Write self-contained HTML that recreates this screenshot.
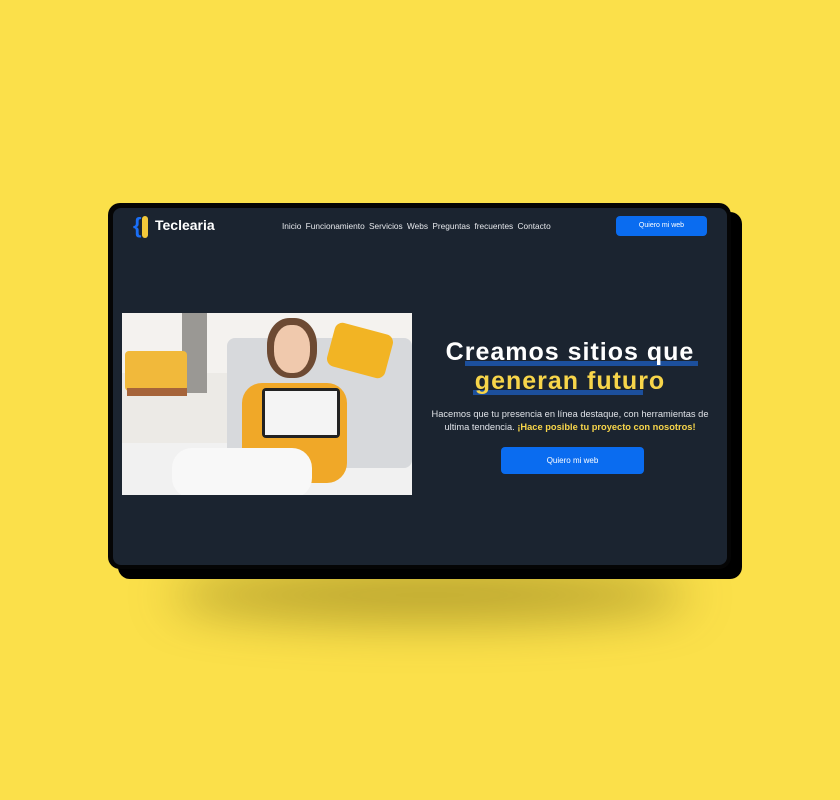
<!DOCTYPE html>
<html><head><meta charset="utf-8"><style>
*{margin:0;padding:0;box-sizing:border-box}
body{width:840px;height:800px;background:#fbe04a;position:relative;overflow:hidden;font-family:"Liberation Sans",sans-serif}
.glow{position:absolute;left:170px;top:570px;width:520px;height:50px;border-radius:50%;background:rgba(70,60,0,.4);filter:blur(24px)}
.back{position:absolute;left:118px;top:212px;width:624px;height:367px;background:#000;border-radius:12px}
.frame{position:absolute;left:108px;top:203px;width:623px;height:366px;background:#050505;border-radius:12px}
.screen{position:absolute;left:113px;top:208px;width:614px;height:357px;background:#1b2430;border-radius:8px;overflow:hidden}
.nav{position:absolute;top:13px;font-size:8.3px;color:#e6e8ec;left:169px;white-space:nowrap;word-spacing:2px}
.btn{position:absolute;background:#0a6cf0;color:#fff;border-radius:4px;text-align:center}
.photo{position:absolute;left:9px;top:105px;width:290px;height:182px;background:#eceae6;overflow:hidden}
.photo div{position:absolute}
h1{position:absolute;left:300px;width:314px;top:130px;text-align:center;font-size:25px;line-height:29px;color:#fff;font-weight:bold;letter-spacing:1px}
.y{color:#f7d54a}
.hl{position:absolute;background:#1c4f9c;height:5px}
p{position:absolute;left:300px;width:314px;top:200px;text-align:center;font-size:9.3px;line-height:13px;color:#e0e3e8}
</style></head><body>
<div class="glow"></div>
<div class="back"></div>
<div class="frame"></div>
<div class="screen">
 <div style="position:absolute;left:20px;top:5px;font-size:22px;color:#1a6ef5;font-weight:bold">{</div>
 <div style="position:absolute;left:29px;top:8px;width:6px;height:22px;background:#f2c83a;border-radius:3px"></div>
 <div style="position:absolute;left:42px;top:9px;font-size:14px;color:#fff;font-weight:bold">Teclearia</div>
 <div class="nav">Inicio Funcionamiento Servicios Webs Preguntas frecuentes Contacto</div>
 <div class="btn" style="left:503px;top:8px;width:91px;height:20px;font-size:7px;line-height:20px">Quiero mi web</div>
 <div class="photo">
  <div style="left:0;top:0;width:290px;height:60px;background:#f4f2ef"></div>
  <div style="left:60px;top:0;width:25px;height:80px;background:#9a9894"></div>
  <div style="left:0;top:130px;width:290px;height:52px;background:#f1f1f1"></div>
  <div style="left:3px;top:38px;width:62px;height:40px;background:#f1b93b;border-radius:4px"></div>
  <div style="left:5px;top:75px;width:60px;height:8px;background:#a6643a"></div>
  <div style="left:105px;top:25px;width:185px;height:130px;background:#d7d9dc;border-radius:8px"></div>
  <div style="left:208px;top:15px;width:60px;height:45px;background:#f2b424;border-radius:8px;transform:rotate(15deg)"></div>
  <div style="left:145px;top:5px;width:50px;height:60px;background:#6d4a33;border-radius:45%"></div>
  <div style="left:152px;top:12px;width:36px;height:48px;background:#f0c9ad;border-radius:45%"></div>
  <div style="left:120px;top:70px;width:105px;height:100px;background:#f0a828;border-radius:20px"></div>
  <div style="left:50px;top:135px;width:140px;height:50px;background:#f8f8f8;border-radius:20px"></div>
  <div style="left:140px;top:75px;width:78px;height:50px;background:#222;border-radius:4px"></div>
  <div style="left:143px;top:78px;width:72px;height:44px;background:#f4f4f4"></div>
 </div>
 <div class="hl" style="left:352px;top:153px;width:233px"></div>
 <div class="hl" style="left:360px;top:182px;width:170px"></div>
 <h1>Creamos sitios que<br><span class="y">generan futuro</span></h1>
 <p>Hacemos que tu presencia en línea destaque, con herramientas de<br>ultima tendencia. <b class="y">¡Hace posible tu proyecto con nosotros!</b></p>
 <div class="btn" style="left:388px;top:239px;width:143px;height:27px;font-size:8px;line-height:27px">Quiero mi web</div>
</div>
</body></html>
